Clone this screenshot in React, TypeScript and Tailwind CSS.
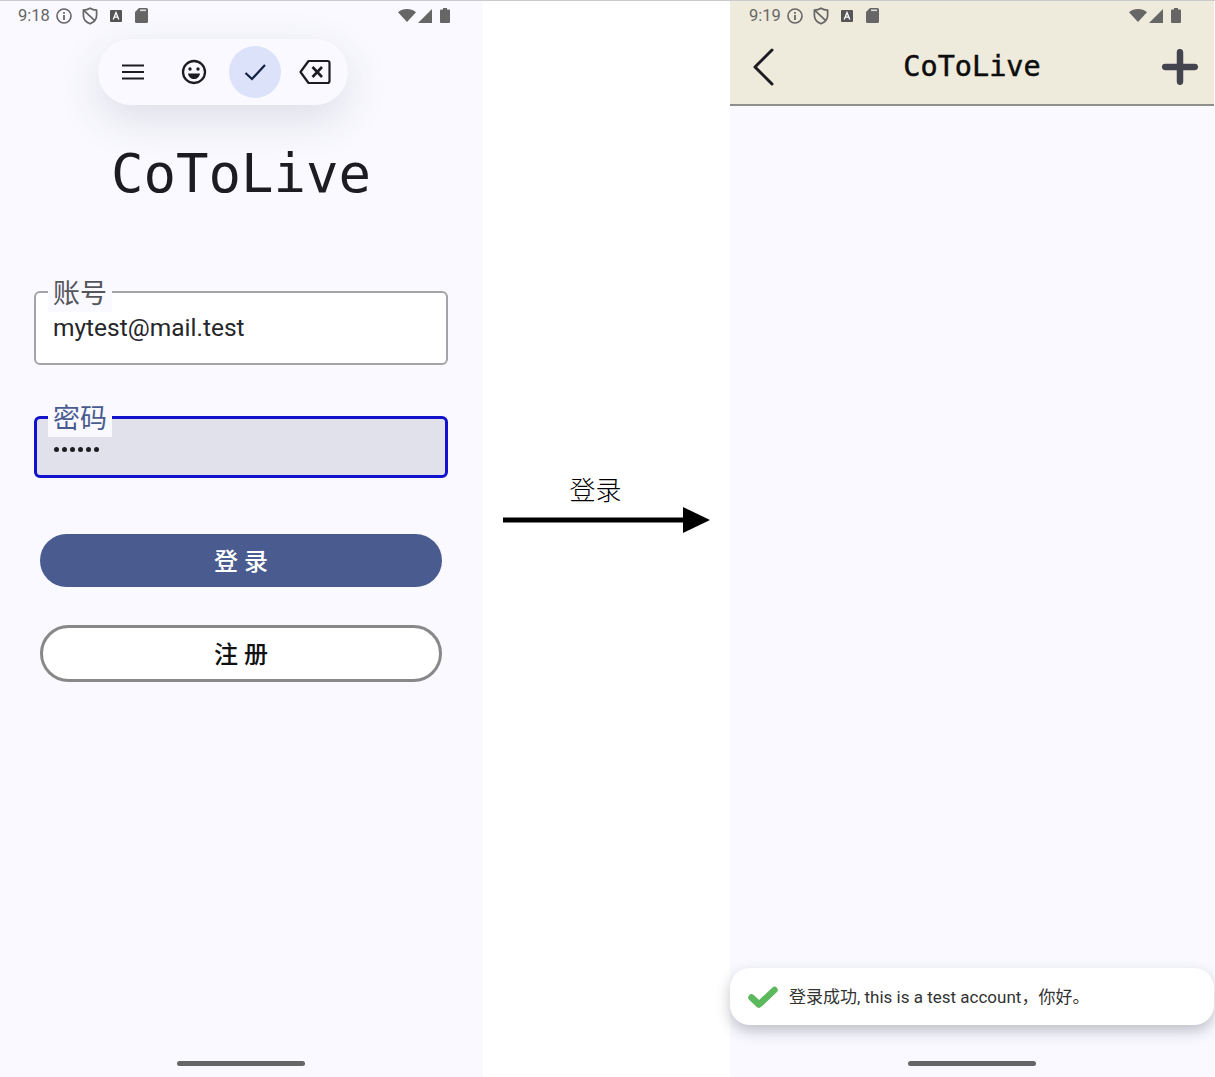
import React from "react";

const CJK = "font-['Roboto','Noto_Sans_CJK_SC',sans-serif]";

function StatusBar({ time, inset }: { time: string; inset: string }) {
  return (
    <div className={`flex h-[29px] items-center text-[#666666] ${inset}`}>
      <span className="mt-[1px] font-['Roboto',sans-serif] text-[16.5px] leading-none">{time}</span>
      <svg className="ml-[5px]" width="18" height="18" viewBox="0 0 18 18">
        <circle cx="9" cy="9" r="7" fill="none" stroke="#666" strokeWidth="1.6" />
        <rect x="8.1" y="8" width="1.8" height="5" fill="#666" />
        <rect x="8.1" y="5" width="1.8" height="1.8" fill="#666" />
      </svg>
      <svg className="ml-[9px]" width="16" height="18" viewBox="0 0 16 18">
        <path d="M8 1.2 C10 2.4 12.2 3 14.6 3.2 V8.5 C14.6 12 12.4 15 8 16.8 C3.6 15 1.4 12 1.4 8.5 V3.2 C3.8 3 6 2.4 8 1.2 Z" fill="none" stroke="#666" strokeWidth="1.7" />
        <path d="M1.8 3.4 L12.8 13.6" stroke="#666" strokeWidth="1.7" />
      </svg>
      <svg className="ml-[12px]" width="12" height="12" viewBox="0 0 12 12">
        <rect width="12" height="12" rx="1" fill="#555" />
        <path d="M3.2 9.5 L6 2.5 L8.8 9.5 M4.3 7.2 H7.7" fill="none" stroke="#fff" strokeWidth="1.3" />
      </svg>
      <svg className="ml-[13px]" width="13" height="15" viewBox="0 0 13 15">
        <path d="M4 0 H11.5 A1.5 1.5 0 0 1 13 1.5 V13.5 A1.5 1.5 0 0 1 11.5 15 H1.5 A1.5 1.5 0 0 1 0 13.5 V4 Z" fill="#666" />
        <rect x="5" y="1.5" width="6" height="1.6" fill="#ddd" />
      </svg>
      <svg className="ml-auto" width="18" height="13" viewBox="0 0 18 13">
        <path d="M0 3.2 C5 -1 13 -1 18 3.2 L9 13 Z" fill="#666" />
      </svg>
      <svg className="ml-[2px]" width="14" height="14" viewBox="0 0 14 14">
        <path d="M14 0 V14 H0 Z" fill="#666" />
      </svg>
      <svg className="ml-[8px]" width="10" height="15" viewBox="0 0 10 15">
        <path d="M3 0 H7 V1.5 H9 A1 1 0 0 1 10 2.5 V14 A1 1 0 0 1 9 15 H1 A1 1 0 0 1 0 14 V2.5 A1 1 0 0 1 1 1.5 H3 Z" fill="#666" />
      </svg>
    </div>
  );
}

function HomeBar() {
  return <div className="mx-auto mb-[11px] h-[5px] w-[128px] shrink-0 rounded-full bg-[#666666]" />;
}

function Toolbar() {
  return (
    <div className="absolute top-[38px] left-[98px] flex h-[66px] w-[250px] items-center rounded-full bg-[#f9f9ff] shadow-[0_14px_44px_rgba(60,60,80,0.14)]">
      <div className="flex w-[70px] justify-center">
        <svg width="24" height="16" viewBox="0 0 24 16">
          <path d="M1 1.5 H23 M1 8 H23 M1 14.5 H23" stroke="#1c1c22" strokeWidth="2.2" />
        </svg>
      </div>
      <div className="flex w-[52px] justify-center">
        <svg width="26" height="26" viewBox="0 0 26 26">
          <circle cx="13" cy="13" r="11" fill="none" stroke="#1c1c22" strokeWidth="2.3" />
          <circle cx="9" cy="10" r="1.7" fill="#1c1c22" />
          <circle cx="17" cy="10" r="1.7" fill="#1c1c22" />
          <path d="M7 14.5 H19 C18.5 18 16 20 13 20 C10 20 7.5 18 7 14.5 Z" fill="#1c1c22" />
        </svg>
      </div>
      <div className="ml-[9px] flex h-[52px] w-[52px] items-center justify-center rounded-full bg-[#dbe2f9]">
        <svg width="24" height="20" viewBox="0 0 24 20">
          <path d="M2.5 11 L9 17 L22 3" fill="none" stroke="#141f45" strokeWidth="2.2" />
        </svg>
      </div>
      <div className="ml-[4px] flex w-[60px] justify-center">
        <svg width="32" height="26" viewBox="0 0 32 26">
          <path d="M9.5 2 H28.5 A2 2 0 0 1 30.5 4 V22 A2 2 0 0 1 28.5 24 H9.5 L1.5 13 Z" fill="none" stroke="#1c1c22" strokeWidth="2.2" strokeLinejoin="round" />
          <path d="M13.5 8 L23 18 M23 8 L13.5 18" stroke="#1c1c22" strokeWidth="2.6" />
        </svg>
      </div>
    </div>
  );
}

function LoginScreen() {
  return (
    <div className={`relative flex w-[483px] shrink-0 flex-col bg-[#f9f9ff] pr-[1px] ${CJK}`}>
      <StatusBar time="9:18" inset="pr-[32px] pl-[18px]" />
      <Toolbar />
      <h1 className="mt-[113px] text-center font-['DejaVu_Sans_Mono',monospace] text-[54px] leading-[62px] font-normal text-[#1c1c22]">
        CoToLive
      </h1>
      <div className="mt-[86px] flex flex-col px-[34px]">
        <div className="relative h-[74px] rounded-[6px] border-2 border-[#a3a3a8] bg-white pt-[18px] pl-[17px]">
          <span className="absolute -top-[14px] left-[12px] h-[33px] bg-[#f9f9ff] px-[5px] text-[27px] leading-[30px] text-[#55555c]">
            账号
          </span>
          <span className="block text-[24.5px] leading-[34px] text-[#26262b]">mytest@mail.test</span>
        </div>
        <div className="relative mt-[51px] h-[62px] rounded-[6px] border-[3px] border-[#1212cc] bg-[#e1e1eb] pt-[18px] pl-[17px]">
          <span className="absolute -top-[15px] left-[11px] h-[33px] bg-[#f9f9ff] px-[5px] text-[27px] leading-[30px] text-[#4a5c8f]">
            密码
          </span>
          <div className="flex gap-[3px] pt-[10px]">
            {[0, 1, 2, 3, 4, 5].map((i) => (
              <span key={i} className="h-[5px] w-[5px] rounded-full bg-[#1c1c22]" />
            ))}
          </div>
        </div>
      </div>
      <div className="mt-[56px] flex flex-col gap-[38px] px-[40px]">
        <button className="h-[53px] rounded-full bg-[#4a5c8f] pt-[3px] pl-[6px] text-[24px] leading-none font-medium tracking-[6px] text-white">
          登录
        </button>
        <button className="h-[57px] rounded-full border-[3px] border-[#888888] bg-white pt-[2px] pl-[6px] text-[24px] leading-none font-medium tracking-[6px] text-[#111111]">
          注册
        </button>
      </div>
      <div className="flex-1" />
      <HomeBar />
    </div>
  );
}

function ArrowStep() {
  return (
    <div className={`flex w-[247px] shrink-0 flex-col items-center bg-white pt-[474px] ${CJK}`}>
      <span className="mr-[22px] text-[26px] leading-[32px] font-light text-black">登录</span>
      <svg width="207" height="26" viewBox="0 0 207 26">
        <path d="M0 13 H182" stroke="#000" strokeWidth="5" />
        <path d="M180 0 L207 13 L180 26 Z" fill="#000" />
      </svg>
    </div>
  );
}

function HomeScreen() {
  return (
    <div className={`flex w-[484px] shrink-0 flex-col bg-[#f9f9ff] ${CJK}`}>
      <div className="h-[105px] border-b-2 border-[#8e8e8a] bg-[#eeebdc]">
        <StatusBar time="9:19" inset="pr-[33px] pl-[19px]" />
        <div className="flex items-center pt-[18px] pr-[16px] pl-[22px]">
          <svg width="22" height="38" viewBox="0 0 22 38">
            <path d="M20 2 L3 19 L20 36" fill="none" stroke="#1c1c22" strokeWidth="3" strokeLinecap="round" strokeLinejoin="round" />
          </svg>
          <span className="flex-1 pl-[8px] text-center font-['DejaVu_Sans_Mono',monospace] text-[28.5px] leading-[38px] font-normal text-[#0d0d0d] [-webkit-text-stroke:0.5px_#0d0d0d]">
            CoToLive
          </span>
          <svg width="36" height="36" viewBox="0 0 36 36">
            <path d="M18 3.2 V32.8 M3.2 18 H32.8" stroke="#44444f" strokeWidth="6.5" strokeLinecap="round" />
          </svg>
        </div>
      </div>
      <div className="flex-1" />
      <div className="flex h-[57px] items-center rounded-[20px] bg-white pl-[18px] shadow-[0_6px_14px_rgba(60,60,80,0.3)]">
        <svg width="30" height="22" viewBox="0 0 30 22">
          <path d="M3.5 11.5 L11 18.5 L26.5 4" fill="none" stroke="#5cb85c" strokeWidth="6.5" strokeLinecap="round" strokeLinejoin="round" />
        </svg>
        <span className="mt-[2px] ml-[11px] text-[17px] leading-none text-[#333333]">登录成功, this is a test account，你好。</span>
      </div>
      <div className="h-[36px]" />
      <HomeBar />
    </div>
  );
}

export default function App() {
  return (
    <div className="flex h-[1077px] w-[1215px] overflow-hidden border-t border-[#c9c9ce] bg-white">
      <LoginScreen />
      <ArrowStep />
      <HomeScreen />
    </div>
  );
}
